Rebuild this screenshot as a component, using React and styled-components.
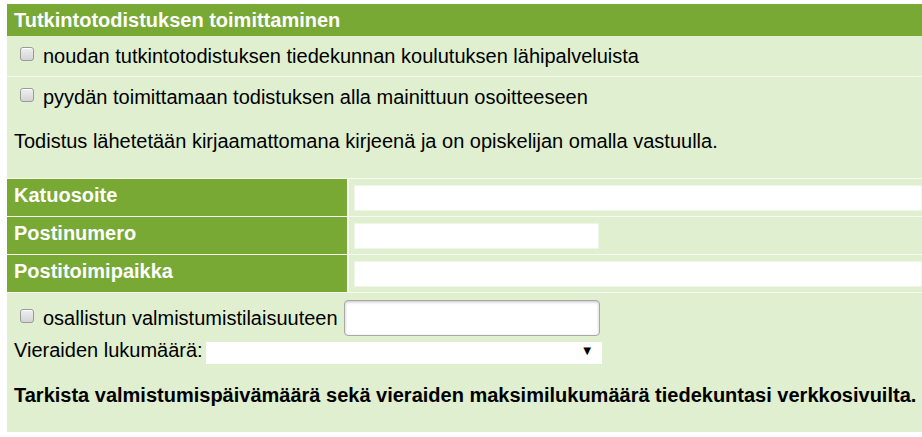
import React from "react";
import styled, { createGlobalStyle } from "styled-components";

const GlobalStyle = createGlobalStyle`
  html, body {
    margin: 0;
    padding: 0;
    background: #fff;
  }
  body {
    padding: 4px 0 0 7px;
    font-family: "Liberation Sans", Arial, sans-serif;
    color: #000;
    overflow: hidden;
  }
`;

const green = "#78a935";
const pale = "#dfefcf";

const Panel = styled.section`
  background: ${pale};
  width: 100%;
  font-size: 20px;
  line-height: 23px;
`;

const Header = styled.div`
  background: ${green};
  color: #fff;
  font-weight: 700;
  height: 32px;
  line-height: 32px;
  padding: 0 7px;
`;

const OptionRow = styled.label`
  display: flex;
  align-items: center;
  height: 40px;
  padding-left: 13px;
  border-bottom: ${(p) => (p.$line ? "1px solid #f4f9ee" : "none")};
  gap: 9px;
`;

const Box = styled.input.attrs({ type: "checkbox" })`
  appearance: none;
  margin: 0;
  width: 14px;
  height: 14px;
  border: 1px solid #9a9a9a;
  border-radius: 3px;
  background: linear-gradient(#efefef, #d4d4d4);
  box-shadow: inset 0 1px 0 #fff;
  position: relative;
  top: -2px;
  flex: none;
`;

const Note = styled.p`
  margin: 0;
  height: 61px;
  padding: 13px 7px 0;
  box-sizing: border-box;
`;

const AddressTable = styled.div`
  display: grid;
  grid-template-columns: 340px 1fr;
  column-gap: 2px;
  row-gap: 1px;
  background: #f6faf1;
  padding: 1px 0;
`;

const Label = styled.div`
  background: ${green};
  color: #fff;
  font-weight: 700;
  height: 37px;
  padding: 5px 7px 0;
  box-sizing: border-box;
`;

const Cell = styled.div`
  background: ${pale};
  padding: 6px 0 0 5px;
  height: 37px;
  box-sizing: border-box;
`;

const Field = styled.input.attrs({ type: "text" })`
  display: block;
  width: ${(p) => p.$w || "100%"};
  height: 26px;
  border: 1px solid #eef6e6;
  background: #fff;
  box-sizing: border-box;
  margin: 0;
  padding: 0 4px;
  outline: none;
`;

const AttendRow = styled.label`
  display: flex;
  align-items: center;
  padding: 7px 0 0 13px;
  gap: 9px;
`;

const AttendText = styled.span`
  margin-right: -3px;
`;

const RoundField = styled.input.attrs({ type: "text" })`
  width: 256px;
  height: 36px;
  box-sizing: border-box;
  border: 1px solid #a8a8a8;
  border-radius: 4px;
  box-shadow: inset 0 1px 3px rgba(0, 0, 0, 0.25);
  background: #fff;
  margin: 0;
  outline: none;
`;

const GuestRow = styled.div`
  display: flex;
  align-items: center;
  padding: 3px 0 0 7px;
  gap: 3px;
`;

const SelectWrap = styled.div`
  position: relative;
  width: 396px;
  height: 22px;
`;

const Select = styled.select`
  appearance: none;
  width: 100%;
  height: 100%;
  border: none;
  background: #fff;
  margin: 0;
  font-size: 14px;
  outline: none;
`;

const Arrow = styled.span`
  position: absolute;
  right: 8px;
  top: 4px;
  font-size: 13px;
  line-height: 14px;
  pointer-events: none;
`;

const Check = styled.p`
  margin: 0;
  padding: 22px 7px 0;
  font-weight: 700;
  white-space: nowrap;
  height: 70px;
  box-sizing: border-box;
`;

export default function App() {
  return (
    <>
      <GlobalStyle />
      <Panel>
        <Header>Tutkintotodistuksen toimittaminen</Header>
        <OptionRow $line>
          <Box />
          noudan tutkintotodistuksen tiedekunnan koulutuksen lähipalveluista
        </OptionRow>
        <OptionRow>
          <Box />
          pyydän toimittamaan todistuksen alla mainittuun osoitteeseen
        </OptionRow>
        <Note>
          Todistus lähetetään kirjaamattomana kirjeenä ja on opiskelijan omalla vastuulla.
        </Note>
        <AddressTable>
          <Label>Katuosoite</Label>
          <Cell>
            <Field />
          </Cell>
          <Label>Postinumero</Label>
          <Cell>
            <Field $w="245px" />
          </Cell>
          <Label>Postitoimipaikka</Label>
          <Cell>
            <Field />
          </Cell>
        </AddressTable>
        <AttendRow>
          <Box />
          <AttendText>osallistun valmistumistilaisuuteen</AttendText>
          <RoundField />
        </AttendRow>
        <GuestRow>
          Vieraiden lukumäärä:
          <SelectWrap>
            <Select defaultValue="">
              <option value=""></option>
            </Select>
            <Arrow>▼</Arrow>
          </SelectWrap>
        </GuestRow>
        <Check>
          Tarkista valmistumispäivämäärä sekä vieraiden maksimilukumäärä tiedekuntasi verkkosivuilta.
        </Check>
      </Panel>
    </>
  );
}
